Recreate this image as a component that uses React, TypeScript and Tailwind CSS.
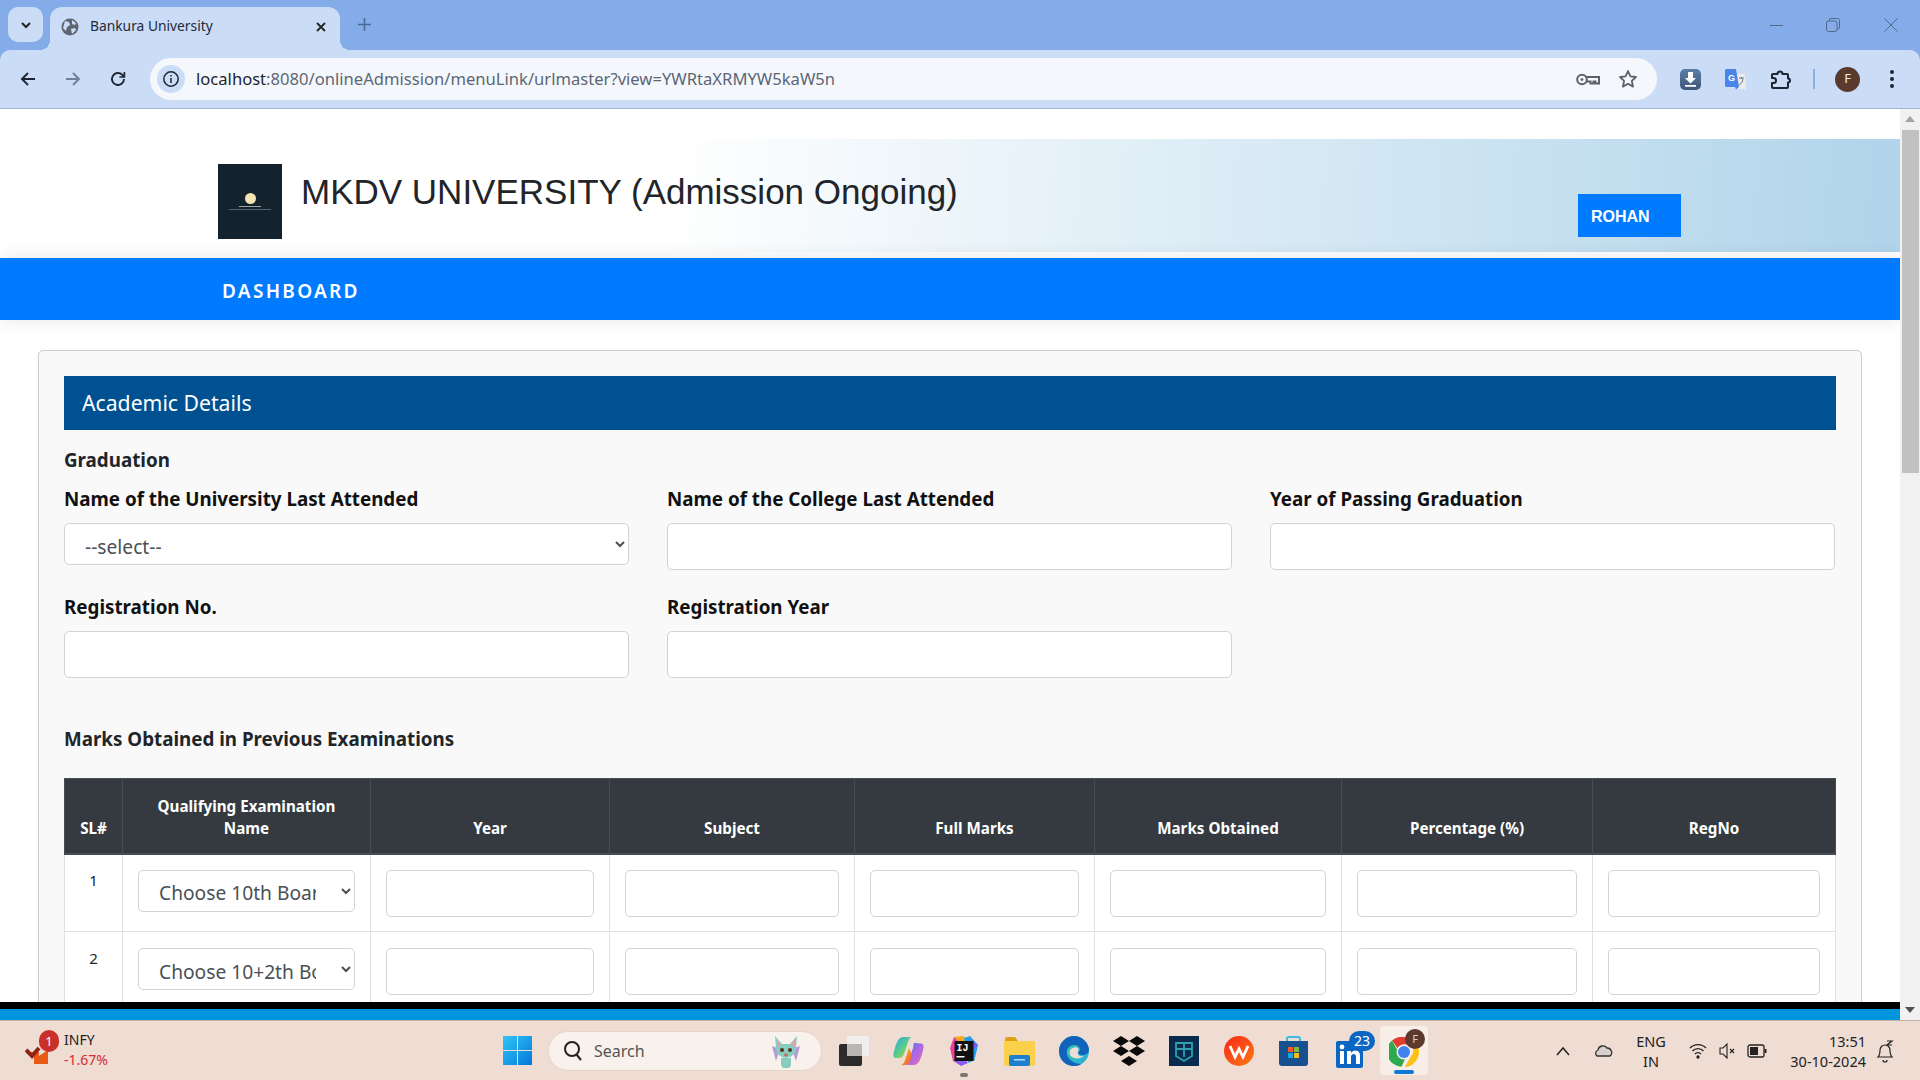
import React from "react";

const ui = "font-['Noto_Sans','Open_Sans',sans-serif]";

function Chevron() {
  return (
    <svg width="12" height="12" viewBox="0 0 12 12" fill="none" stroke="#222" strokeWidth="2"><path d="M2 4l4 4 4-4" /></svg>
  );
}

function TabStrip() {
  return (
    <div className="h-[50px] bg-[#84ace9] flex items-start relative">
      <div className="ml-[8px] mt-[7px] w-[35px] h-[35px] rounded-[10px] bg-[#cbdcf6] flex items-center justify-center"><Chevron /></div>
      <div className="relative ml-[7px] mt-[7px] w-[290px] h-[43px] bg-[#cbdcf6] rounded-t-[12px] flex items-center pl-[11px] pb-[4px]">
        <div className="absolute -left-[10px] bottom-0 w-[10px] h-[10px] bg-[radial-gradient(circle_at_0_0,transparent_10px,#cbdcf6_10px)]" />
        <div className="absolute -right-[10px] bottom-0 w-[10px] h-[10px] bg-[radial-gradient(circle_at_100%_0,transparent_10px,#cbdcf6_10px)]" />
        <svg width="18" height="18" viewBox="0 0 18 18"><circle cx="9" cy="9" r="8.5" fill="#5f6672" /><path d="M4 3l4 1 1 3-3 2-1 4-3-3zM11 2l4 3-1 2-3-1zM10 11l4-1 1 2-4 4z" fill="#cbdcf6" /></svg>
        <span className={`${ui} ml-[11px] text-[13.8px] text-[#1f2a3a] whitespace-nowrap`}>Bankura University</span>
        <svg className="ml-auto mr-[13px]" width="12" height="12" viewBox="0 0 12 12" stroke="#222" strokeWidth="1.8"><path d="M2 2l8 8M10 2l-8 8" /></svg>
      </div>
      <svg className="ml-[17px] mt-[17px]" width="15" height="15" viewBox="0 0 15 15" stroke="#4c6a99" strokeWidth="1.6"><path d="M7.5 1v13M1 7.5h13" /></svg>
      <div className="ml-auto flex items-center mt-[18px]">
        <svg width="13" height="13" viewBox="0 0 13 13" stroke="#56688a" strokeWidth="1"><path d="M0 6.5h13" /></svg>
        <svg className="ml-[43px]" width="14" height="14" viewBox="0 0 14 14" fill="none" stroke="#56688a" strokeWidth="1"><rect x="0.5" y="3" width="10.5" height="10.5" rx="2" /><path d="M3 3V2.5a2 2 0 012-2h6.5a2 2 0 012 2V9a2 2 0 01-2 2H11" /></svg>
        <svg className="ml-[44px] mr-[22px]" width="14" height="14" viewBox="0 0 14 14" stroke="#56688a" strokeWidth="1"><path d="M.5.5l13 13M13.5.5l-13 13" /></svg>
      </div>
    </div>
  );
}

function Toolbar() {
  return (
    <div className="h-[59px] bg-[#84ace9]">
      <div className="h-[59px] bg-[#cbdcf6] rounded-t-[10px] border-b border-[#a4b4d0] flex items-center">
        <svg className="ml-[19px]" width="18" height="18" viewBox="0 0 18 18" fill="none" stroke="#1f2430" strokeWidth="1.9"><path d="M16 9H3M9 3L3 9l6 6" /></svg>
        <svg className="ml-[27px]" width="18" height="18" viewBox="0 0 18 18" fill="none" stroke="#6f7f98" strokeWidth="1.9"><path d="M2 9h13M9 3l6 6-6 6" /></svg>
        <svg className="ml-[27px]" width="18" height="18" viewBox="0 0 18 18" fill="none" stroke="#1f2430" strokeWidth="1.9"><path d="M15 9a6 6 0 11-1.8-4.3L15 6.5" /><path d="M15.4 2v5h-5" strokeWidth="1.7" /></svg>
        <div className="ml-[23px] w-[1507px] h-[42px] rounded-full bg-[#f4f8fd] flex items-center pl-[7px]">
          <div className="w-[28px] h-[28px] rounded-full bg-[#cbdcf6] flex items-center justify-center">
            <svg width="18" height="18" viewBox="0 0 18 18" fill="none" stroke="#1f2430" strokeWidth="1.5"><circle cx="9" cy="9" r="7.2" /><path d="M9 8v5M9 5v1.6" /></svg>
          </div>
          <span className={`${ui} ml-[11px] text-[16.6px] whitespace-nowrap text-[#1f2430]`}>localhost<span className="text-[#5d6675]">:8080/onlineAdmission/menuLink/urlmaster?view=YWRtaXRMYW5kaW5n</span></span>
          <svg className="ml-auto" width="24" height="15" viewBox="0 0 24 15" fill="none" stroke="#5e6165" strokeWidth="2"><circle cx="6" cy="7.500" r="4.800" /><circle cx="6" cy="7.500" r="1" fill="#5e6165" strokeWidth="1" /><path d="M10.500 5h12.500v6.500h-3.500v-2h-2v2h-3v-2h-4" /></svg>
          <svg className="ml-[18px] mr-[19px]" width="20" height="20" viewBox="0 0 20 20" fill="none" stroke="#5e6165" strokeWidth="1.8" strokeLinejoin="round"><path d="M10 2l2.400 5.400 5.600.6-4.200 3.800 1.200 5.800L10 14.700 4.900 17.600l1.200-5.800L2 8l5.600-.6z" /></svg>
        </div>
        <svg className="ml-[23px]" width="21" height="21" viewBox="0 0 21 21"><defs><linearGradient id="dl" x1="0" y1="0" x2="0" y2="1"><stop offset="0" stopColor="#5a7ea8" /><stop offset="1" stopColor="#3f5678" /></linearGradient></defs><rect width="21" height="21" rx="5" fill="url(#dl)" /><path d="M8 3h5v6h3l-5.500 5.500L5 9h3zM5 16h11v1.800H5z" fill="#fff" /></svg>
        <svg className="ml-[24px]" width="21" height="21" viewBox="0 0 21 21"><path d="M10 5l10 0 1 15-10 0z" fill="#ececea" /><path d="M14 9h5M16.500 8v2M18 10c-.5 3-2 5-4 6" stroke="#6a7a8a" strokeWidth="1" fill="none" /><path d="M1.500 0h9.500l3 18-3 2.500-1-2.500H1.500A1.500 1.500 0 010 16.500V1.500A1.500 1.500 0 011.500 0z" fill="#4a86ea" /><text x="3" y="12" fontSize="9" fontWeight="700" fill="#fff" fontFamily="Liberation Sans">G</text></svg>
        <svg className="ml-[24px]" width="22" height="22" viewBox="0 0 22 22" fill="none" stroke="#1b2430" strokeWidth="2" strokeLinejoin="round"><path d="M3 6h4.500a2.500 2.500 0 015 0H17a1 1 0 011 1v3.500a2 2 0 010 4V19a1 1 0 01-1 1H3a1 1 0 01-1-1v-4h1.500a2.500 2.500 0 000-5H2V7a1 1 0 011-1z" /></svg>
        <div className="ml-[21px] w-[2px] h-[20px] bg-[#8aaee6]" />
        <div className={`${ui} ml-[20px] w-[25px] h-[25px] rounded-full bg-[#5b3a2e] text-[#eee] text-[13px] flex items-center justify-center`}>F</div>
        <svg className="ml-[29px]" width="6" height="20" viewBox="0 0 6 20" fill="#1f2430"><circle cx="3" cy="3" r="2" /><circle cx="3" cy="10" r="2" /><circle cx="3" cy="17" r="2" /></svg>
      </div>
    </div>
  );
}

function Field({ label, select }: { label: string; select?: boolean }) {
  return (
    <div>
      <div className={`${ui} h-[26px] leading-[28px] mb-[12px] font-bold text-[18.800px] text-[#111] whitespace-nowrap`}>{label}</div>
      {select ? (
        <select className={`${ui} w-full h-[42px] bg-white border border-[#ced4da] rounded-[5px] pl-[16px] pr-[22px] pt-[4px] text-[19.200px] text-[#495057]`} defaultValue="s">
          <option value="s">--select--</option>
        </select>
      ) : (
        <input className="block w-full h-[47px] bg-white border border-[#ced4da] rounded-[5px]" />
      )}
    </div>
  );
}

const cols = ["w-[58px]", "w-[248px]", "w-[239px]", "w-[245px]", "w-[240px]", "w-[247px]", "w-[251px]", "w-[243px]"];
const heads = ["SL#", "Qualifying Examination Name", "Year", "Subject", "Full Marks", "Marks Obtained", "Percentage (%)", "RegNo"];

function BoardSelect({ board }: { board: string }) {
  return (
    <select className={`${ui} w-full h-[42px] bg-white border border-[#ced4da] rounded-[5px] pl-[16px] pr-[22px] pt-[4px] text-[19.200px] text-[#495057]`} defaultValue="b">
      <option value="b">{board}</option>
    </select>
  );
}

function Input() {
  return <input className="block w-full h-[47px] bg-white border border-[#ced4da] rounded-[5px]" />;
}

function Page() {
  return (
    <div className="h-[893px] overflow-hidden bg-white">
      <div className="h-[30px]" />
      <div className="h-[113px] flex items-start bg-[linear-gradient(93deg,#ffffff_35%,#b0d4ea_100%)]">
        <div className="ml-[218px] mt-[25px] w-[64px] h-[75px] bg-[#14222d] flex flex-col items-center pt-[29px]">
          <div className="w-[11px] h-[11px] rounded-full bg-[#f3e3b5]" />
          <div className="mt-[2px] w-[22px] h-[1px] bg-[#9aa3a8]" />
          <div className="mt-[2px] w-[42px] h-[1px] bg-[#55626b]" />
        </div>
        <div className="ml-[19px] mt-[32px] font-['Liberation_Sans',sans-serif] text-[35px] leading-[41px] text-[#212529] whitespace-nowrap">MKDV UNIVERSITY (Admission Ongoing)</div>
        <div className="ml-auto mr-[219px] mt-[55px] w-[103px] h-[43px] bg-[#007bff] pl-[13px] font-['Liberation_Sans',sans-serif] font-bold text-[16px] leading-[46px] text-white">ROHAN</div>
      </div>
      <div className="h-[6px]" />
      <div className="relative h-[62px] bg-[#007bff] shadow-[0_0_18px_rgba(0,0,0,0.10)] pl-[222px] flex items-center">
        <span className={`${ui} font-semibold text-[19px] tracking-[2.300px] text-white mt-[4px]`}>DASHBOARD</span>
      </div>
      <div className="mt-[30px] ml-[38px] w-[1824px] border border-[#cccccc] rounded-[5px] bg-[#f9f9f9] px-[25px] pt-[25px] h-[800px]">
        <div className={`${ui} h-[54px] leading-[54px] bg-[#005192] pl-[18px] text-[21.200px] text-white`}>Academic Details</div>
        <div className={`${ui} mt-[17px] h-[26px] leading-[27px] font-bold text-[18.800px] text-[#212529]`}>Graduation</div>
        <div className="mt-[12px] w-[1771px] grid grid-cols-3 gap-x-[38px] gap-y-[23px] items-start">
          <div className="h-[85px]"><Field label="Name of the University Last Attended" select /></div>
          <Field label="Name of the College Last Attended" />
          <Field label="Year of Passing Graduation" />
          <Field label="Registration No." />
          <Field label="Registration Year" />
        </div>
        <div className={`${ui} mt-[48px] h-[26px] leading-[26px] font-bold text-[18.800px] text-[#212529]`}>Marks Obtained in Previous Examinations</div>
        <table className="mt-[26px] w-[1771px] table-fixed border-collapse bg-white">
          <colgroup>
            {cols.map((c) => (
              <col key={c} className={c} />
            ))}
          </colgroup>
          <thead>
            <tr className="h-[75px] bg-[#343a40]">
              {heads.map((h, i) => (
                <th key={h} className={`${ui} border border-[#454d55] border-b-[2px] align-bottom pb-[14px] ${i === 0 ? "px-0" : "px-[25px]"} text-[15.200px] leading-[22px] font-bold text-white whitespace-normal`}>{h}</th>
              ))}
            </tr>
          </thead>
          <tbody>
            <tr className="h-[78px]">
              <td className={`${ui} border border-[#dee2e6] align-top text-center pt-[14px] text-[15px] text-[#212529]`}>1</td>
              <td className="border border-[#dee2e6] align-top pt-[15px] px-[15px]"><BoardSelect board="Choose 10th Board" /></td>
              {[0, 1, 2, 3, 4, 5].map((i) => (
                <td key={i} className="border border-[#dee2e6] align-top pt-[15px] px-[15px]"><Input /></td>
              ))}
            </tr>
            <tr className="h-[78px]">
              <td className={`${ui} border border-[#dee2e6] align-top text-center pt-[15px] text-[15px] text-[#212529]`}>2</td>
              <td className="border border-[#dee2e6] align-top pt-[16px] px-[15px]"><BoardSelect board="Choose 10+2th Board" /></td>
              {[0, 1, 2, 3, 4, 5].map((i) => (
                <td key={i} className="border border-[#dee2e6] align-top pt-[16px] px-[15px]"><Input /></td>
              ))}
            </tr>
          </tbody>
        </table>
      </div>
    </div>
  );
}

function Scrollbar() {
  return (
    <div className="w-[20px] h-[911px] bg-[#f1f1f1] flex flex-col items-center">
      <svg className="mt-[7px]" width="12" height="7" viewBox="0 0 12 7" fill="#a3a3a3"><path d="M6 0l5 6H1z" /></svg>
      <div className="mt-[7px] w-[17px] h-[343px] bg-[#c1c1c1]" />
      <svg className="mt-auto mb-[6px]" width="12" height="7" viewBox="0 0 12 7" fill="#505050"><path d="M1 0h10L6 6z" /></svg>
    </div>
  );
}

function Taskbar() {
  return (
    <div className={`${ui} h-[60px] bg-[#efdcd2] border-t border-[#bdb3ab] flex items-center`}>
      <div className="relative ml-[25px] w-[30px] h-[30px] -mt-[4px]">
        <svg width="30" height="30" viewBox="0 0 30 30"><path d="M5 18l9 0 0 4 9-6v14H9v-6z" fill="#e65a14" /><path d="M1 16l6 6 7-8" fill="none" stroke="#8f2414" strokeWidth="4" /></svg>
        <div className="absolute left-[14px] -top-[4px] w-[20px] h-[22px] rounded-full bg-[#c9302a] text-white text-[13px] leading-[22px] text-center">1</div>
      </div>
      <div className="ml-[9px] w-[60px] text-[14px] leading-[20px] -mt-[2px]">
        <div className="text-[#222]">INFY</div>
        <div className="text-[#cf2f2f]">-1.67%</div>
      </div>
      <svg className="ml-[379px]" width="29" height="29" viewBox="0 0 29 29"><defs><linearGradient id="win" x1="0" y1="0" x2="1" y2="1"><stop offset="0" stopColor="#30c5f7" /><stop offset="1" stopColor="#0578d8" /></linearGradient></defs><path d="M0 0h14v14H0zM15 0h14v14H15zM0 15h14v14H0zM15 15h14v14H15z" fill="url(#win)" /></svg>
      <div className="ml-[16px] w-[274px] h-[40px] rounded-full bg-[#f8f1ec] border border-[#e5d5cb] flex items-center pl-[14px]">
        <svg width="20" height="22" viewBox="0 0 20 22" fill="none" stroke="#222" strokeWidth="2"><circle cx="9" cy="9" r="7" /><path d="M13.500 14.500L18 20" /></svg>
        <span className="ml-[11px] text-[16px] text-[#555]">Search</span>
        <svg className="ml-auto mr-[18px]" width="34" height="34" viewBox="0 0 34 34"><path d="M3 12l8 3-4 12zM31 12l-8 3 4 12z" fill="#b49ad8" /><path d="M6 2l7 8h8l7-8-1 12a10 10 0 01-20 0z" fill="#86cdbf" /><path d="M8 5l4 6-4 2zM26 5l-4 6 4 2z" fill="#e8a0a8" /><path d="M12 24h10v6a5 5 0 01-10 0z" fill="#86cdbf" /><circle cx="13" cy="16" r="2" fill="#5a2f1f" /><circle cx="21" cy="16" r="2" fill="#5a2f1f" /><ellipse cx="17" cy="21" rx="2" ry="1.400" fill="#c06a5a" /></svg>
      </div>
      <svg className="ml-[17px]" width="30" height="30" viewBox="0 0 30 30"><rect x="0" y="8" width="23" height="22" rx="2" fill="#2b2b2b" /><rect x="8" y="0" width="22" height="20" rx="2" fill="#f1f0ef" fillOpacity="0.9" /><rect x="8" y="8" width="15" height="12" fill="#b9b7b5" /></svg>
      <svg className="ml-[24px]" width="31" height="30" viewBox="0 0 31 30"><defs><linearGradient id="cp1" x1="0" y1="0" x2="1" y2="1"><stop offset="0" stopColor="#2aa6ea" /><stop offset="0.55" stopColor="#5fd080" /><stop offset="1" stopColor="#f9c520" /></linearGradient><linearGradient id="cp2" x1="0" y1="0" x2="1" y2="1"><stop offset="0" stopColor="#3a7bef" /><stop offset="0.5" stopColor="#a868e8" /><stop offset="1" stopColor="#f06ab0" /></linearGradient><linearGradient id="cp3" x1="0" y1="0" x2="1" y2="1"><stop offset="0" stopColor="#f9c520" /><stop offset="1" stopColor="#f0543a" /></linearGradient></defs><path d="M10 1h9c-2 .5-3 2-4 5L11 18c-1 3-3 4-6 4H3C1 22 0 20 .5 18 2 12 4 1 10 1z" fill="url(#cp1)" /><path d="M21 7c3 0 5 .5 7 .5 2 0 3 2 2.500 4.500C29 18 27 29 21 29h-9c2-.5 3-2 4-5l4-12c.5-2 .5-5 1-5z" fill="url(#cp2)" /><path d="M16 12l-4 12c-1 3-2 4.500-4 5 3 .5 6 0 8-2 1-1 2-4 3-8z" fill="url(#cp3)" /></svg>
      <div className="relative ml-[26px] w-[28px] h-[30px]">
        <svg width="28" height="30" viewBox="0 0 28 30"><path d="M4 1l9-1 5 4-8 6z" fill="#f7a81c" /><path d="M14 2l6-2 8 9-3 13-8-8z" fill="#1e9ff0" /><path d="M20 3l8 6-6 6z" fill="#7a5cf0" /><path d="M0 12l4-11 6 6v19l2 4-9-5z" fill="#f0409a" /><path d="M3 24l8 6 7-3-6-8z" fill="#8a5cf0" /><path d="M24 20l1 4-7 3 1-8z" fill="#1e9ff0" /><rect x="4.500" y="5" width="19" height="20" fill="#111" /><text x="6.500" y="15" fontSize="10" fontWeight="700" fill="#fff" fontFamily="Liberation Mono">IJ</text><rect x="6.500" y="20" width="8" height="1.500" fill="#fff" /></svg>
        <div className="absolute left-[10px] top-[37px] w-[8px] h-[4px] rounded-full bg-[#7d7771]" />
      </div>
      <svg className="ml-[26px]" width="31" height="30" viewBox="0 0 31 30"><path d="M1 3a2 2 0 012-2h8l3 4H1z" fill="#dda00e" /><path d="M0 5h31v23a2 2 0 01-2 2H2a2 2 0 01-2-2z" fill="#fbd14b" /><rect x="5" y="19" width="21" height="11" rx="2" fill="#1b80cf" /><rect x="10" y="23" width="11" height="1.500" fill="#b8dcf5" /></svg>
      <svg className="ml-[24px]" width="30" height="30" viewBox="0 0 30 30"><defs><linearGradient id="ed1" x1="0" y1="0" x2="1" y2="1"><stop offset="0" stopColor="#38d6a0" /><stop offset="1" stopColor="#2aa8e0" /></linearGradient></defs><circle cx="15" cy="15" r="15" fill="url(#ed1)" /><path d="M0 15C0 6 8 0 15 0c8 0 15 7 15 14 0 4-4 5-7 5-2 0-4-1-4-3 3-1 3-6-3-7-6 0-9 4-8 9 1 6 8 10 14 10-1 1-3 2-7 2C7 30 0 24 0 15z" fill="#1262bc" /><path d="M12 13c4-3 9-2 7 3-1 3 2 5 6 4-3 3-9 3-12 1-3-2-3-6-1-8z" fill="#efdcd2" /></svg>
      <svg className="ml-[24px]" width="32" height="30" viewBox="0 0 32 30" fill="#0a0a0a"><path d="M8 0l8 5-8 5-8-5zM24 0l8 5-8 5-8-5zM8 10l8 5-8 5-8-5zM24 10l8 5-8 5-8-5zM16 20l8 5-8 5-8-5z" /></svg>
      <svg className="ml-[24px]" width="30" height="30" viewBox="0 0 30 30" fill="none"><rect width="30" height="30" fill="#082a4c" /><path d="M7 7h16v13l-8 5-8-5zM15 7v14M7 13h16" stroke="#2d9fb0" strokeWidth="1.800" /></svg>
      <svg className="ml-[25px]" width="30" height="30" viewBox="0 0 30 30"><defs><linearGradient id="wps" x1="0" y1="0" x2="1" y2="1"><stop offset="0" stopColor="#f7261c" /><stop offset="1" stopColor="#ff7a10" /></linearGradient></defs><circle cx="15" cy="15" r="15" fill="url(#wps)" /><path d="M6 10l5 11 4-8 4 8 5-11" fill="none" stroke="#fff" strokeWidth="2.800" /></svg>
      <svg className="ml-[25px]" width="29" height="30" viewBox="0 0 29 30"><path d="M8 6V3a2 2 0 012-2h9a2 2 0 012 2v3" fill="none" stroke="#38bde8" strokeWidth="2" /><path d="M0 5h29v22a3 3 0 01-3 3H3a3 3 0 01-3-3z" fill="#17508f" /><rect x="9" y="11" width="5" height="5" fill="#f1592a" /><rect x="15" y="11" width="5" height="5" fill="#7dbb42" /><rect x="9" y="17" width="5" height="5" fill="#1aa5e0" /><rect x="15" y="17" width="5" height="5" fill="#fcb81c" /></svg>
      <div className="relative ml-[28px] w-[39px] h-[37px] -mt-[2px]">
        <svg className="absolute left-0 bottom-0" width="27" height="27" viewBox="0 0 27 27"><rect width="27" height="27" rx="2" fill="#0a66c2" /><rect x="4" y="10" width="4" height="13" fill="#fff" /><circle cx="6" cy="6" r="2.400" fill="#fff" /><path d="M11 10h4v2c1-1.500 2.500-2.400 4.500-2.400 3 0 4.500 2 4.500 5.400v8h-4v-7c0-2-.7-3-2.300-3-1.500 0-2.700 1-2.700 3v7h-4z" fill="#fff" /></svg>
        <div className="absolute right-0 top-0 w-[26px] h-[20px] rounded-full bg-[#0a66c2] text-white text-[14px] leading-[20px] text-center">23</div>
      </div>
      <div className="relative ml-[5px] w-[48px] h-[49px] rounded-[4px] bg-[#f7eee8] flex items-center justify-center pt-[2px]">
        <svg width="30" height="30" viewBox="0 0 30 30"><path d="M15 0a15 15 0 0113 7.500H15a7.500 7.500 0 00-6.500 3.750L3 3.500A15 15 0 0115 0z" fill="#e33b2e" /><path d="M28 7.500A15 15 0 0116 30l6-11a7.500 7.500 0 00-1-11.500z" fill="#fbc116" /><path d="M3 3.500l6 11a7.500 7.500 0 007 7.500l-3.500 7.700A15 15 0 013 3.500z" fill="#2da94f" /><circle cx="15" cy="15" r="7.500" fill="#f7eee8" /><circle cx="15" cy="15" r="6" fill="#3f82f0" /></svg>
        <div className="absolute right-[3px] top-[3px] w-[20px] h-[20px] rounded-full bg-[#5b3a2e] text-[#d8cfc8] text-[11px] leading-[20px] text-center">F</div>
        <div className="absolute left-[14px] bottom-[1px] w-[20px] h-[4px] rounded-full bg-[#0a78d4]" />
      </div>
      <svg className="ml-[126px]" width="18" height="12" viewBox="0 0 18 12" fill="none" stroke="#222" strokeWidth="1.500"><path d="M3 10l6-7 6 7" /></svg>
      <svg className="ml-[21px]" width="20" height="18" viewBox="0 0 20 18"><path d="M5 8a5 5 0 019-2 4.500 4.500 0 013 8H4A3.500 3.500 0 015 8z" fill="#d8d0cb" stroke="#333" strokeWidth="1.300" /></svg>
      <div className="ml-[21px] w-[34px] text-center text-[14.500px] leading-[20px] text-[#222]"><div>ENG</div><div>IN</div></div>
      <svg className="ml-[21px]" width="18" height="16" viewBox="0 0 18 16" fill="none" stroke="#222" strokeWidth="1.300"><path d="M1 5a11 11 0 0116 0M3.500 8a7.500 7.500 0 0111 0M6 11a4 4 0 016 0" /><circle cx="9" cy="14" r="1" fill="#222" /></svg>
      <svg className="ml-[12px]" width="16" height="18" viewBox="0 0 16 18" fill="none" stroke="#222" strokeWidth="1.100"><path d="M1 6h3l4-4v14l-4-4H1zM11 7l4 4M15 7l-4 4" /></svg>
      <svg className="ml-[12px]" width="20" height="16" viewBox="0 0 20 16"><rect x="1" y="2" width="16" height="12" rx="2" fill="none" stroke="#222" strokeWidth="1.300" /><rect x="3" y="4" width="8" height="8" fill="#222" /><rect x="17.500" y="6" width="2" height="4" fill="#222" /></svg>
      <div className="w-[99px] text-right text-[14.500px] leading-[20px] text-[#222]"><div>13:51</div><div>30-10-2024</div></div>
      <svg className="ml-[9px]" width="20" height="24" viewBox="0 0 20 24" fill="none" stroke="#222" strokeWidth="1.200"><path d="M3 18c2-2 2-4 2-7a5 5 0 0110 0c0 3 0 5 2 7zM8 21a2 2 0 004 0" /><path d="M12 2h5l-5 4h5" /></svg>
    </div>
  );
}

export default function App() {
  return (
    <div className="w-[1920px] h-[1080px] overflow-hidden bg-white">
      <TabStrip />
      <Toolbar />
      <div className="flex h-[911px]">
        <div className="w-[1900px]">
          <Page />
          <div className="h-[7px] bg-black" />
          <div className="h-[11px] bg-[#0094dc]" />
        </div>
        <Scrollbar />
      </div>
      <Taskbar />
    </div>
  );
}
